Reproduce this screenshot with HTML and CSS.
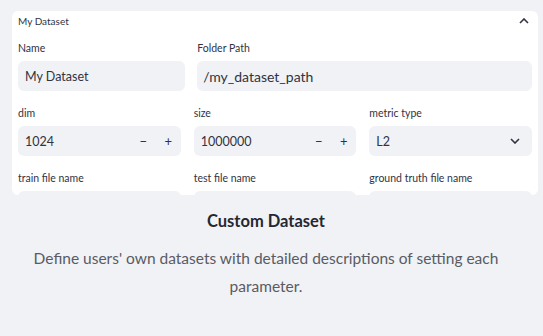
FILE: index.html
```html
<!DOCTYPE html>
<html lang="en">
<head>
  <meta charset="UTF-8">
  <title>Custom Dataset</title>
  <link rel="stylesheet" href="styles.css">
</head>
<body>
  <!-- dataset form preview -->
  <div class="card">
    <div class="card-head">
      <span>My Dataset</span>
      <svg class="chev" width="10" height="6" viewBox="0 0 10 6"><path d="M1 5 L5 1 L9 5" fill="none" stroke="#31333f" stroke-width="1.6"/></svg>
    </div>

    <div class="row row-two">
      <div class="field">
        <label>Name</label>
        <div class="input">My Dataset</div>
      </div>
      <div class="field">
        <label>Folder Path</label>
        <div class="input">/my_dataset_path</div>
      </div>
    </div>

    <div class="row row-three">
      <div class="field">
        <label>dim</label>
        <div class="input num">
          <span class="val">1024</span>
          <span class="step">&minus;</span>
          <span class="step">+</span>
        </div>
      </div>
      <div class="field">
        <label>size</label>
        <div class="input num">
          <span class="val">1000000</span>
          <span class="step">&minus;</span>
          <span class="step">+</span>
        </div>
      </div>
      <div class="field">
        <label>metric type</label>
        <div class="input">
          <span class="val">L2</span>
          <svg class="chev-down" width="10" height="6" viewBox="0 0 10 6"><path d="M1 1 L5 5 L9 1" fill="none" stroke="#31333f" stroke-width="1.6"/></svg>
        </div>
      </div>
    </div>

    <div class="row row-three">
      <div class="field">
        <label>train file name</label>
        <div class="input"></div>
      </div>
      <div class="field">
        <label>test file name</label>
        <div class="input"></div>
      </div>
      <div class="field">
        <label>ground truth file name</label>
        <div class="input"></div>
      </div>
    </div>
  </div>

  <!-- caption -->
  <div class="caption">
    <h2>Custom Dataset</h2>
    <p>Define users' own datasets with detailed descriptions of setting each parameter.</p>
  </div>
</body>
</html>
```

FILE: styles.css
```css
* {
  box-sizing: border-box;
  font-family: 'Lato', sans-serif;
}
body {
  margin: 0;
  padding: 0;
  background: #f0f2f6;
  color: #31333f;
}

/* card */
.card {
  margin: 11px 5px 0 12px;
  height: 184px;
  overflow: hidden;
  background: #fff;
  border-radius: 6px;
  padding: 3px 6px 0 6px;
}
.card-head {
  display: flex;
  justify-content: space-between;
  align-items: center;
  font-size: 10px;
  line-height: 14px;
  height: 14px;
  margin-bottom: 13px;
}
.chev {
  margin-right: 3px;
}

.row {
  display: grid;
  margin-bottom: 15px;
}
.row-two {
  grid-template-columns: 1fr 2fr;
  column-gap: 12px;
}
.row-three {
  grid-template-columns: 1fr 1fr 1fr;
  column-gap: 13px;
}
.field label {
  display: block;
  font-size: 10.5px;
  line-height: 14px;
  margin-bottom: 6px;
}
.input {
  height: 30px;
  background: #f0f2f6;
  border-radius: 6px;
  display: flex;
  align-items: center;
  padding: 0 8px 0 7px;
  font-size: 12.5px;
}
.input.num {
  padding-right: 0;
}
.row-two .field:last-child .input {
  font-size: 14px;
  padding-left: 6px;
}
.input .val {
  flex: 1;
}
.step {
  width: 25px;
  text-align: center;
  font-size: 13px;
}
.chev-down {
  margin-right: 4px;
}

/* caption */
.caption {
  text-align: center;
  padding: 0 31px 0 20px;
}
.caption h2 {
  margin: 15px 0 0;
  font-size: 16.5px;
  line-height: 22px;
  font-weight: bold;
  color: #262730;
}
.caption p {
  margin: 12px 0 0;
  font-size: 15.5px;
  line-height: 28px;
  color: #5a5b63;
}
```
